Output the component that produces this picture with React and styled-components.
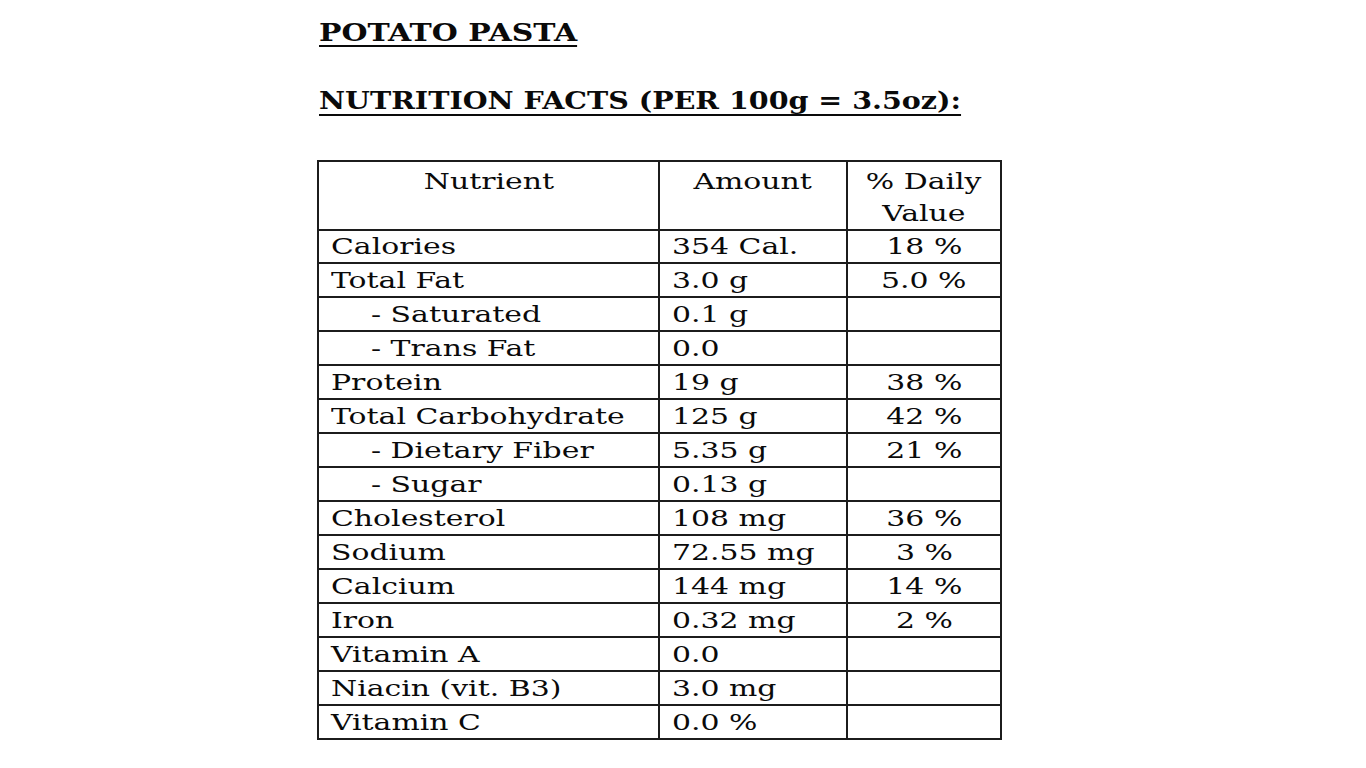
import React from "react";
import styled, { createGlobalStyle } from "styled-components";

const Global = createGlobalStyle`
  html, body { margin: 0; padding: 0; background: #fff; }
  body { font-family: "DejaVu Serif", "Liberation Serif", serif; color: #0a0a0a; }
`;

const Page = styled.div`
  padding: 18px 0 0 317px;
  width: 1366px;
  height: 768px;
  box-sizing: border-box;
  overflow: hidden;
`;

const Heading = styled.h1`
  margin: ${(p) => p.$mt}px 0 0 2px;
  font-size: 24.7px;
  font-weight: 700;
  line-height: 30px;
  white-space: nowrap;
`;

const Stretch = styled.span`
  display: inline-block;
  white-space: nowrap;
  transform: scaleX(${(p) => p.$sx});
  transform-origin: ${(p) => (p.$center ? "center" : "left")} center;
`;

const Underlined = styled(Stretch)`
  text-decoration: underline;
  text-decoration-thickness: 2px;
  text-underline-offset: ${(p) => p.$off}px;
`;

const Grid = styled.div`
  margin-top: 44px;
  display: grid;
  grid-template-columns: 341px 188px 154px;
  grid-auto-rows: 34px;
  width: 683px;
  border-top: 2px solid #1c1c1c;
  border-left: 2px solid #1c1c1c;
`;

const Cell = styled.div`
  box-sizing: border-box;
  border-right: 2px solid #1c1c1c;
  border-bottom: 2px solid #1c1c1c;
  font-size: 21.5px;
  line-height: 30px;
  padding: 2px 0 0 ${(p) => (p.$center ? 0 : p.$indent ? 52 : 12)}px;
  text-align: ${(p) => (p.$center ? "center" : "left")};
  white-space: nowrap;
`;

const HeadCell = styled(Cell)`
  grid-row: span 2;
  height: 69px;
  line-height: 32px;
  padding: 4px 0 0 0;
  text-align: center;
  white-space: normal;
`;

const Line = styled.div`
  white-space: nowrap;
`;

const SX = 1.39;

const rows = [
  ["Calories", "354 Cal.", "18 %"],
  ["Total Fat", "3.0 g", "5.0 %"],
  ["- Saturated", "0.1 g", "", true],
  ["- Trans Fat", "0.0", "", true],
  ["Protein", "19 g", "38 %"],
  ["Total Carbohydrate", "125 g", "42 %"],
  ["- Dietary Fiber", "5.35 g", "21 %", true],
  ["- Sugar", "0.13 g", "", true],
  ["Cholesterol", "108 mg", "36 %"],
  ["Sodium", "72.55 mg", "3 %"],
  ["Calcium", "144 mg", "14 %"],
  ["Iron", "0.32 mg", "2 %"],
  ["Vitamin A", "0.0", ""],
  ["Niacin (vit. B3)", "3.0 mg", ""],
  ["Vitamin C", "0.0 %", ""],
];

export default function App() {
  return (
    <>
      <Global />
      <Page>
        <Heading $mt={0}>
          <Underlined $sx={1.21} $off={4}>POTATO PASTA</Underlined>
        </Heading>
        <Heading $mt={38}>
          <Underlined $sx={1.155} $off={5}>NUTRITION FACTS (PER 100g = 3.5oz):</Underlined>
        </Heading>
        <Grid>
          <HeadCell>
            <Stretch $sx={SX} $center>Nutrient</Stretch>
          </HeadCell>
          <HeadCell>
            <Stretch $sx={SX} $center>Amount</Stretch>
          </HeadCell>
          <HeadCell>
            <Line><Stretch $sx={SX} $center>% Daily</Stretch></Line>
            <Line><Stretch $sx={SX} $center>Value</Stretch></Line>
          </HeadCell>
          {rows.map(([n, a, d, indent]) => (
            <React.Fragment key={n}>
              <Cell $indent={indent}>
                <Stretch $sx={SX}>{n}</Stretch>
              </Cell>
              <Cell>
                <Stretch $sx={SX}>{a}</Stretch>
              </Cell>
              <Cell $center>
                {d && <Stretch $sx={SX} $center>{d}</Stretch>}
              </Cell>
            </React.Fragment>
          ))}
        </Grid>
      </Page>
    </>
  );
}
